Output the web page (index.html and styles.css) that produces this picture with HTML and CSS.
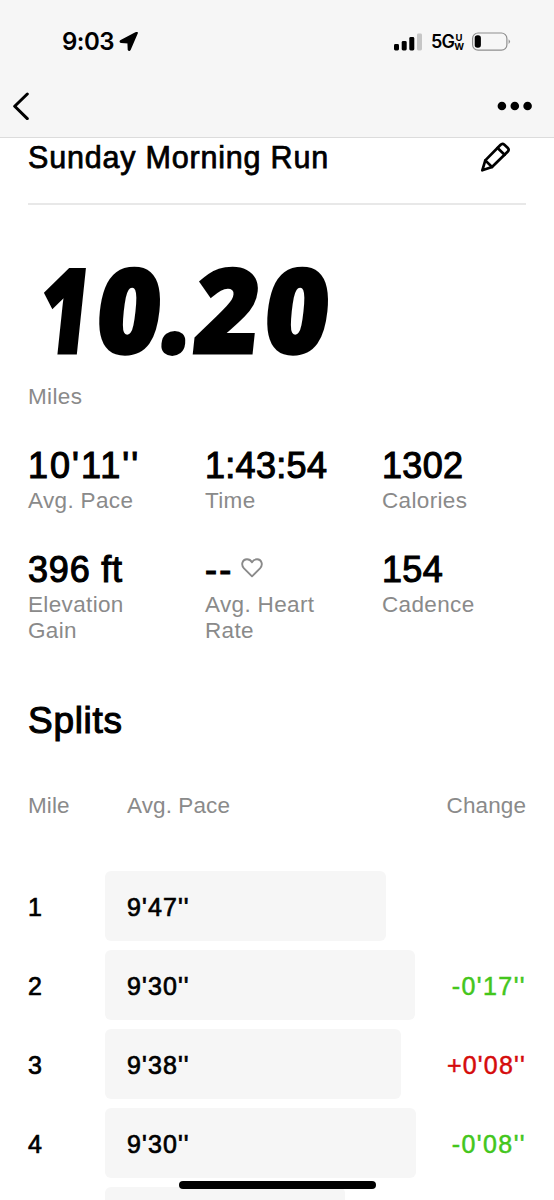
FILE: index.html
```
<!DOCTYPE html>
<html lang="en">
<head>
<meta charset="utf-8">
<title>Sunday Morning Run</title>
<link rel="stylesheet" href="styles.css">
</head>
<body>
<div class="screen">
  <header class="top">
    <div class="status">
      <div class="clock"><span>9:03</span>
        <svg width="20" height="20" viewBox="0 0 20 20"><path d="M18 1.3 L10.9 17.6 Q10.2 19 9.5 17.6 L9.2 10.6 L2.2 10.2 Q.6 9.6 2 8.7 L16.7 1 Q18.4 .1 18 1.3Z" fill="#000" stroke="#000" stroke-width="1.6" stroke-linejoin="round"/></svg>
      </div>
      <div class="signals">
        <svg class="bars" width="28" height="18" viewBox="0 0 28 18"><rect x="0" y="11" width="5" height="6.5" rx="1.4"/><rect x="7.7" y="8" width="5" height="9.5" rx="1.4"/><rect x="15.3" y="4" width="5" height="13.5" rx="1.4"/><rect x="23" y=".5" width="5" height="17" rx="1.4" fill="#c6c6c6"/></svg>
        <div class="net"><span>5G</span><span class="uw"><i>U</i><i>W</i></span></div>
        <svg width="39" height="20" viewBox="0 0 39 20"><rect x=".6" y="1" width="34.3" height="17.2" rx="5.5" fill="none" stroke="#8e8e8e" stroke-width="1.2"/><rect x="2.7" y="3.2" width="6.2" height="12.6" rx="2.8"/><path d="M36.6 7.2 Q39.4 9.6 36.6 12Z" fill="#8e8e8e"/></svg>
      </div>
    </div>
    <nav class="nav">
      <svg width="18" height="28" viewBox="0 0 18 28"><path d="M15.3 2 L2.7 14.3 L15.3 26.6" fill="none" stroke="#000" stroke-width="3" stroke-linecap="round" stroke-linejoin="round"/></svg>
      <svg width="36" height="10" viewBox="0 0 36 10"><circle cx="4.9" cy="5" r="4.3"/><circle cx="17.8" cy="5" r="4.3"/><circle cx="30.6" cy="5" r="4.3"/></svg>
    </nav>
  </header>
  <main class="content">
    <div class="title-row">
      <h1>Sunday Morning Run</h1>
      <svg width="32" height="32" viewBox="0 0 32 32" fill="none" stroke="#000" stroke-width="2.7" stroke-linejoin="round" stroke-linecap="round"><path d="M2.3 29.3 L5.3 19.4 L20.4 4 Q22.4 2 24.4 3.8 L27.6 6.8 Q29.6 8.8 27.6 10.8 L12 26Z"/><path d="M17.6 7 L24.6 13.8 M5.3 19.4 L12 26"/></svg>
    </div>
    <section class="distance">
      <div class="big"><span class="one">1</span><span>0</span><span class="point">.</span><span>2</span><span>0</span></div>
      <div class="label">Miles</div>
    </section>
    <section class="stats">
      <div><div class="value marks">10'11''</div><div class="label">Avg. Pace</div></div>
      <div><div class="value">1:43:54</div><div class="label">Time</div></div>
      <div><div class="value">1302</div><div class="label">Calories</div></div>
      <div><div class="value feet">396 ft</div><div class="label">Elevation<br>Gain</div></div>
      <div><div class="value heart"><span class="dashes">--</span><svg width="22" height="20" viewBox="0 0 22 20"><path d="M11 18.3 L3 10.3 C-.4 6.7 1.4 1.4 5.8 1.3 C8.4 1.2 10 2.6 11 4.3 C12 2.6 13.6 1.2 16.2 1.3 C20.6 1.4 22.4 6.7 19 10.3Z" fill="none" stroke="#8a8a8a" stroke-width="1.9" stroke-linejoin="round"/></svg></div><div class="label">Avg. Heart<br>Rate</div></div>
      <div><div class="value">154</div><div class="label">Cadence</div></div>
    </section>
    <h2>Splits</h2>
    <section class="splits">
      <div class="row head label"><span>Mile</span><span class="pace-head">Avg. Pace</span><span class="change">Change</span></div>
      <div class="row"><span>1</span><div><div class="bar" style="width:281px">9'47''</div></div><span></span></div>
      <div class="row"><span>2</span><div><div class="bar" style="width:310px">9'30''</div></div><span class="change faster">-0'17''</span></div>
      <div class="row"><span>3</span><div><div class="bar" style="width:296px">9'38''</div></div><span class="change slower">+0'08''</span></div>
      <div class="row"><span>4</span><div><div class="bar" style="width:311px">9'30''</div></div><span class="change faster">-0'08''</span></div>
      <div class="row"><span></span><div><div class="bar" style="width:240px"></div></div><span></span></div>
    </section>
  </main>
  <div class="home"></div>
</div>
</body>
</html>
```
FILE: styles.css
```
* { box-sizing: border-box; }
body { margin: 0; background: #fff; color: #000; font-family: "Liberation Sans", Arial, sans-serif; }
svg { display: block; flex: none; }
.screen { position: relative; width: 554px; height: 1200px; overflow: hidden; }
.top { height: 138px; background: #f6f6f6; border-bottom: 1px solid #dcdcdc; }
.status { display: flex; justify-content: space-between; height: 78px; padding: 31px 43px 0 62px; }
.clock { display: flex; gap: 5px; height: 21px; align-items: center; font: 600 24px/21px Inter, sans-serif; letter-spacing: -.5px; }
.signals { display: flex; align-items: center; height: 21px; }
.net { display: flex; margin: 0 8px 0 9px; font: 600 18px/21px Inter, sans-serif; letter-spacing: -.8px; }
.uw { display: grid; font-size: 9.5px; line-height: 8px; padding-top: 3px; letter-spacing: 0; font-weight: 700; justify-items: center; }
.uw i { font-style: normal; }
.nav { display: flex; justify-content: space-between; align-items: center; height: 56px; padding: 0 21px 0 12px; }
.content { padding: 0 28px; }
.title-row { display: flex; justify-content: space-between; height: 67px; padding: 3px 14px 0 0; border-bottom: 2px solid #e8e8e8; }
h1 { margin: 0; font-size: 30.5px; line-height: 33px; font-weight: 400; letter-spacing: .8px; -webkit-text-stroke: .75px #000; white-space: nowrap; }
.label { color: #8a8a8a; font-size: 22.5px; line-height: 26px; letter-spacing: .35px; }
.distance { height: 240px; padding-top: 59px; }
.big { display: grid; grid-template-columns: 66px 62px 32px 70px 70px; justify-items: center; width: 300px; height: 88px; margin: 0 0 32px 5px; font: 800 117px/88px "Open Sans", sans-serif; -webkit-text-stroke: 3px #000; transform: skewX(-6deg); }
.big span { display: flex; justify-content: center; width: 100%; transform: scaleX(.94); }
.big .one { transform: scaleX(.75); }
.big .point { transform: scaleX(.88); }
.stats { display: grid; grid-template-columns: 177px 177px 1fr; grid-template-rows: 104px 104px; height: 208px; }
.value { height: 43px; font-size: 36px; line-height: 42px; letter-spacing: .3px; -webkit-text-stroke: 1.1px #000; white-space: nowrap; }
.marks { letter-spacing: 2px; }
.feet { letter-spacing: .8px; }
.heart { display: flex; gap: 7px; }
.heart svg { margin-top: 9px; }
.dashes { letter-spacing: 2.3px; }
h2 { margin: 47px 0 0; font-size: 37px; line-height: 42px; font-weight: 400; letter-spacing: .7px; -webkit-text-stroke: 1.1px #000; }
.splits { display: grid; gap: 9px; padding-top: 51px; }
.row { display: grid; grid-template-columns: 77px 1fr 80px; align-items: center; height: 70px; line-height: 32px; font-size: 25px; letter-spacing: 1.1px; -webkit-text-stroke: .7px currentColor; white-space: nowrap; }
.row > span { padding-top: 2px; }
.row.head { height: 69px; align-items: start; line-height: 26px; font-size: 22.5px; letter-spacing: .1px; -webkit-text-stroke: 0; }
.row.head > span { padding-top: 0; }
.row .pace-head { padding-left: 22px; }
.bar { height: 70px; padding-left: 22px; line-height: 72px; background: #f6f6f6; border-radius: 6px; }
.change { justify-self: end; }
.faster { color: #43c61c; letter-spacing: 1.4px; -webkit-text-stroke-width: .5px; }
.slower { color: #d50b0b; letter-spacing: 1.2px; -webkit-text-stroke-width: .5px; }
.home { position: absolute; left: 179px; top: 1181px; width: 197px; height: 8px; border-radius: 4px; background: #000; }
```
